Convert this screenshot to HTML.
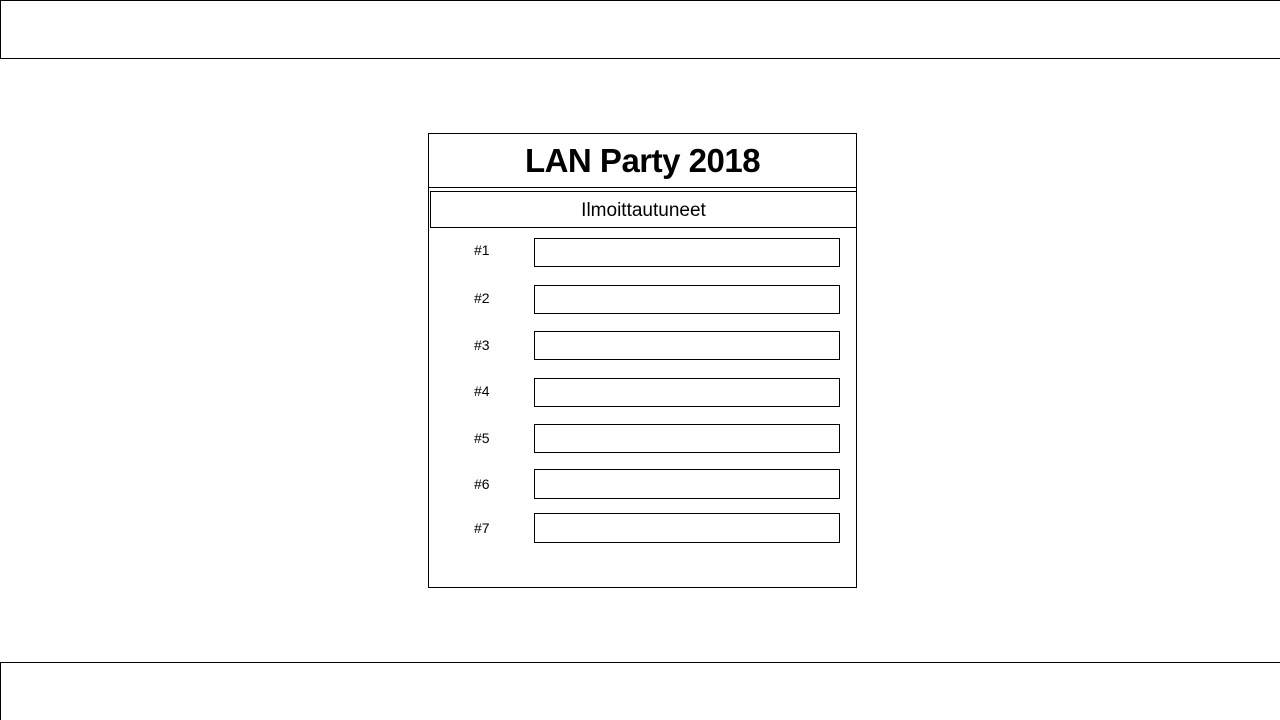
<!DOCTYPE html>
<html style="overflow:hidden;height:720px"><head><style>
body{margin:0;width:1280px;height:720px;position:relative;overflow:hidden;background:#fff;font-family:"Liberation Sans",sans-serif}
.a{position:absolute;box-sizing:border-box;border:1px solid #000}
.l{position:absolute;font-size:14px;left:474px}
</style></head><body>
<div class="a" style="left:0;top:0;width:1290px;height:59px"></div>
<div class="a" style="left:0;top:662px;width:1290px;height:58px;border-bottom:none"></div>
<div class="a" style="left:428px;top:133px;width:429px;height:455px"></div>
<div class="a" style="left:428px;top:133px;width:429px;height:55px;text-align:center;font-weight:bold;font-size:33px;line-height:54px;letter-spacing:-0.5px">LAN Party 2018</div>
<div class="a" style="left:430px;top:191px;width:427px;height:37px;text-align:center;font-size:19px;line-height:37px">Ilmoittautuneet</div>
<div class="l" style="top:242px">#1</div><div class="a" style="left:534px;top:238px;width:306px;height:29px"></div>
<div class="l" style="top:290px">#2</div><div class="a" style="left:534px;top:285px;width:306px;height:29px"></div>
<div class="l" style="top:337px">#3</div><div class="a" style="left:534px;top:331px;width:306px;height:29px"></div>
<div class="l" style="top:383px">#4</div><div class="a" style="left:534px;top:378px;width:306px;height:29px"></div>
<div class="l" style="top:430px">#5</div><div class="a" style="left:534px;top:424px;width:306px;height:29px"></div>
<div class="l" style="top:476px">#6</div><div class="a" style="left:534px;top:469px;width:306px;height:30px"></div>
<div class="l" style="top:520px">#7</div><div class="a" style="left:534px;top:513px;width:306px;height:30px"></div>
</body></html>
